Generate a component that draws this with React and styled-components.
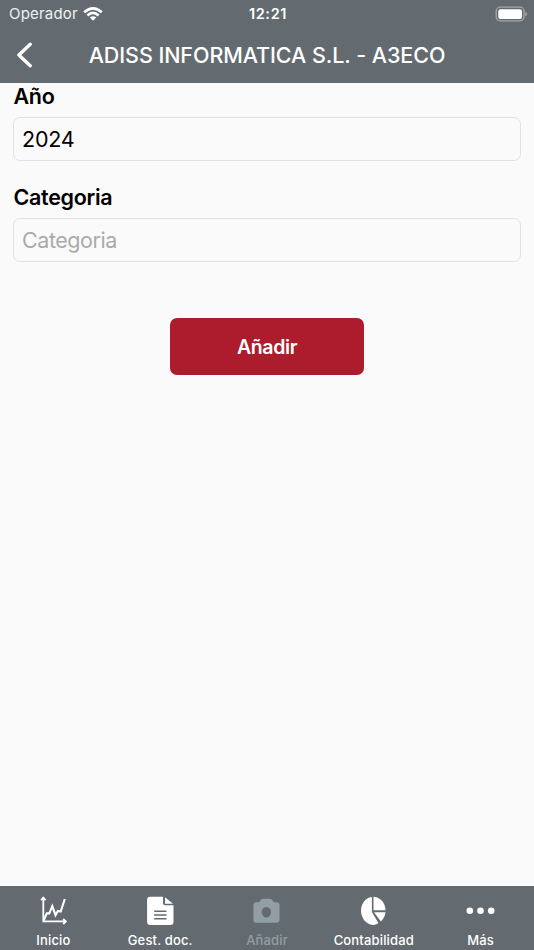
import { useState } from 'react';
import styled, { createGlobalStyle } from 'styled-components';

const GlobalStyle = createGlobalStyle`
  * {
    box-sizing: border-box;
  }

  body {
    margin: 0;
    background: #fafafa;
    font-family: Inter, 'Liberation Sans', sans-serif;
  }

  button {
    border: none;
    padding: 0;
    background: none;
    font-family: inherit;
  }
`;

const Screen = styled.div`
  display: flex;
  flex-direction: column;
  height: 950px;
  color: #000;
  background: #fafafa;
`;

const Header = styled.header`
  height: 83px;
  color: #fff;
  background: #646b70;
`;

const StatusBar = styled.div`
  display: grid;
  grid-template-columns: 1fr auto 1fr;
  align-items: center;
  height: 27px;
  padding: 0 7px 0 9px;
  font-size: 15px;
  line-height: 28px;
`;

const Carrier = styled.div`
  display: flex;
  align-items: center;
  gap: 5px;
  letter-spacing: 0.2px;
  color: #eff0f0;
`;

const Clock = styled.div`
  font-weight: 600;
  font-size: 14.5px;
  letter-spacing: 0.65px;
`;

const BatteryIcon = styled.svg`
  justify-self: end;
`;

const NavBar = styled.div`
  display: grid;
  grid-template-columns: 50px 1fr 50px;
  align-items: center;
  height: 55px;
`;

const BackButton = styled.button`
  display: flex;
  height: 54px;
  align-items: center;
  padding-left: 16px;
  color: #fff;
`;

const Title = styled.h1`
  margin: 0;
  font-size: 21.5px;
  font-weight: 500;
  line-height: 54px;
  letter-spacing: -0.07px;
  text-align: center;
  white-space: nowrap;
`;

const Form = styled.main`
  display: flex;
  flex: 1;
  flex-direction: column;
  padding: 0 13px;
`;

const Field = styled.div`
  display: flex;
  flex-direction: column;
  height: 101px;
`;

const Label = styled.span`
  height: 34px;
  padding-left: 0.5px;
  font-size: 21.5px;
  font-weight: 600;
  line-height: 27px;
  letter-spacing: -0.3px;
`;

const Picker = styled.div`
  height: 44px;
  padding-left: 8px;
  border: 1px solid #e2e2e2;
  border-radius: 7px;
  font-size: 21.5px;
  line-height: 43px;
  letter-spacing: ${(props) => (props.$empty ? '-0.45px' : '-0.2px')};
  color: ${(props) => (props.$empty ? '#aaa' : '#000')};
`;

const SubmitButton = styled.button`
  align-self: center;
  width: 194px;
  height: 57px;
  margin-top: 33px;
  padding-top: 1px;
  border-radius: 7px;
  font-size: 19.5px;
  font-weight: 600;
  line-height: 56px;
  letter-spacing: -0.35px;
  color: #fff;
  background: #ad1c2c;
`;

const TabBar = styled.nav`
  display: grid;
  grid-template-columns: repeat(5, 1fr);
  height: 64px;
  background: #646b70;
`;

const Tab = styled.button`
  display: flex;
  flex-direction: column;
  align-items: center;
  padding-top: 9px;
  font-size: 13px;
  font-weight: 500;
  line-height: 18px;
  letter-spacing: 0.15px;
  color: ${(props) => (props.$active ? '#919ea6' : '#fff')};
`;

const TabLabel = styled.span`
  margin-top: 4px;
  white-space: nowrap;
`;

const WifiIcon = () => (
  <svg width='20' height='16' viewBox='0 0 20 16' fill='none' stroke='#fff' strokeWidth='2.7'>
    <path d='M1.2 6.3Q10 -1.6 18.8 6.3M4.4 9.4Q10 4.5 15.6 9.4' />
    <path d='M6.8 11.5Q10 8.9 13.2 11.5L10 14.7z' fill='#fff' stroke='none' />
  </svg>
);

const ChartIcon = () => (
  <svg width='32' height='32' fill='none' stroke='currentColor' strokeWidth='1.8'>
    <path d='M6.3 3V26.4H28.5M4.1 5.1L6.3 2.7 8.5 5.1M26.2 23.8L28.8 26.4 26.2 29' />
    <path d='M6.8 25.3L9.8 18.4H12.3L15.3 11.2 18.5 20.2 20.9 16 23.7 16.5 27.8 4' strokeWidth='2.1' />
  </svg>
);

const DocumentIcon = () => (
  <svg width='32' height='32' fill='currentColor'>
    <path d='M6.3 1.7H19V8.2Q19 10.3 21.1 10.3H29.5V26.8Q29.5 30 26.3 30H6.3Q3.1 30 3.1 26.8V4.9Q3.1 1.7 6.3 1.7z' />
    <path d='M21 2.2L29 8.8H21z' />
    <path d='M10.2 16.3H22.5M10.2 20H22.5M10.2 23.8H22.5' stroke='#646b70' strokeWidth='1.5' />
  </svg>
);

const CameraIcon = () => (
  <svg width='32' height='32' fill='currentColor'>
    <path
      fillRule='evenodd'
      d='M5.4 7.3H8L10 4.8Q10.9 3.8 12.2 3.8H18.8Q20.1 3.8 21 4.8L23 7.3H25.5Q28.5 7.3 28.5 10.3V24.7Q28.5 27.7 25.5 27.7H5.4Q2.4 27.7 2.4 24.7V10.3Q2.4 7.3 5.4 7.3zM15.4 12A4.7 5.3 0 1 0 15.4 22.6A4.7 5.3 0 1 0 15.4 12z'
    />
  </svg>
);

const PieIcon = () => (
  <svg width='32' height='32' fill='currentColor'>
    <path d='M13.9 1.9V16.9L20.4 28.1C17.2 30.7 12.4 30.6 8.6 27.6C1.4 21.8 1.3 10.3 7.8 4.5Q10.4 2.1 13.9 1.9z' />
    <path d='M15.5 1.8C22.3 2 27.2 7.8 27.5 15.2H15.5z' />
    <path d='M16 17.2H27.5Q26.9 22.4 22.9 26.4z' />
  </svg>
);

const DotsIcon = () => (
  <svg width='32' height='32' fill='currentColor'>
    <circle cx='4.8' cy='15.7' r='3.3' />
    <circle cx='15.5' cy='15.7' r='3.3' />
    <circle cx='26.2' cy='15.7' r='3.3' />
  </svg>
);

const tabs = [
  { id: 'home', label: 'Inicio', Icon: ChartIcon },
  { id: 'documents', label: 'Gest. doc.', Icon: DocumentIcon },
  { id: 'add', label: 'Añadir', Icon: CameraIcon },
  { id: 'accounting', label: 'Contabilidad', Icon: PieIcon },
  { id: 'more', label: 'Más', Icon: DotsIcon },
];

const App = () => {
  const [currentTab, setCurrentTab] = useState('add');

  return (
    <>
      <GlobalStyle />
      <Screen>
        <Header>
          <StatusBar>
            <Carrier>
              Operador
              <WifiIcon />
            </Carrier>
            <Clock>12:21</Clock>
            <BatteryIcon width='32' height='16' viewBox='0 0 32 16'>
              <rect x='1.2' y='1.2' width='27.8' height='13.6' rx='4' fill='none' stroke='#a3a8ab' strokeWidth='1.3' />
              <rect x='3.3' y='3.2' width='23.7' height='9.7' rx='2.2' fill='#fff' />
              <path d='M30.3 5.6Q32 6.2 32 8T30.3 10.4z' fill='#a3a8ab' />
            </BatteryIcon>
          </StatusBar>
          <NavBar>
            <BackButton>
              <svg width='17' height='26' fill='none' stroke='currentColor' strokeWidth='3.3'>
                <path d='M14.2 2.2L2.9 13 14.2 23.8' strokeLinecap='round' strokeLinejoin='round' />
              </svg>
            </BackButton>
            <Title>ADISS INFORMATICA S.L. - A3ECO</Title>
          </NavBar>
        </Header>
        <Form>
          <Field>
            <Label>Año</Label>
            <Picker>2024</Picker>
          </Field>
          <Field>
            <Label>Categoria</Label>
            <Picker $empty>Categoria</Picker>
          </Field>
          <SubmitButton>Añadir</SubmitButton>
        </Form>
        <TabBar>
          {tabs.map(({ id, label, Icon }) => (
            <Tab key={id} $active={currentTab === id} onClick={() => setCurrentTab(id)}>
              <Icon />
              <TabLabel>{label}</TabLabel>
            </Tab>
          ))}
        </TabBar>
      </Screen>
    </>
  );
};

export default App;
